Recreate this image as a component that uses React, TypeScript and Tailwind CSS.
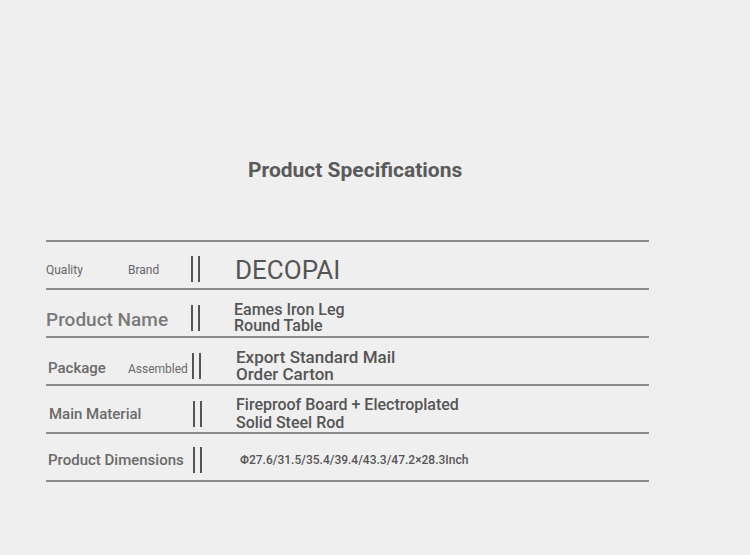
import React from "react";

type Row = {
  label: React.ReactNode;
  value: React.ReactNode;
  pad: string;
  barsX: string;
  valueX: string;
};

const Bars = () => (
  <div className="flex h-[26px] gap-[5px] shrink-0">
    <span className="w-[2px] bg-[#555]" />
    <span className="w-[2px] bg-[#555]" />
  </div>
);

const rows: Row[] = [
  {
    label: (
      <div className="flex items-baseline pt-[10px]">
        <span className="w-[82px] text-[12px] text-[#666]">Quality</span>
        <span className="text-[12px] text-[#666]">Brand</span>
      </div>
    ),
    pad: "pt-[8px]",
    barsX: "w-[145px]",
    valueX: "w-[35px]",
    value: <span className="text-[26px] text-[#555] leading-none pt-[2px]">DECOPAI</span>,
  },
  {
    label: (
      <span className="pt-[15px] text-[19px] font-medium text-[#7a7a7a]">Product Name</span>
    ),
    pad: "pt-[10px]",
    barsX: "w-[145px]",
    valueX: "w-[34px]",
    value: (
      <div className="text-[16px] leading-[16px] text-[#555] font-medium">
        <div>Eames Iron Leg</div>
        <div>Round Table</div>
      </div>
    ),
  },
  {
    label: (
      <div className="flex items-baseline pl-[2px] pt-[14px]">
        <span className="w-[80px] text-[15px] font-medium text-[#6a6a6a]">Package</span>
        <span className="text-[12px] text-[#6a6a6a]">Assembled</span>
      </div>
    ),
    pad: "pt-[10px]",
    barsX: "w-[146px]",
    valueX: "w-[35px]",
    value: (
      <div className="text-[17px] leading-[17px] text-[#555] font-medium">
        <div>Export Standard Mail</div>
        <div>Order Carton</div>
      </div>
    ),
  },
  {
    label: (
      <span className="pl-[3px] pt-[11px] text-[15px] font-medium text-[#6a6a6a]">
        Main Material
      </span>
    ),
    pad: "pt-[10px]",
    barsX: "w-[147px]",
    valueX: "w-[34px]",
    value: (
      <div className="text-[16px] leading-[18px] text-[#555] font-medium">
        <div>Fireproof Board + Electroplated</div>
        <div>Solid Steel Rod</div>
      </div>
    ),
  },
  {
    label: (
      <span className="pl-[2px] pt-[6px] text-[15px] font-medium text-[#6a6a6a]">
        Product Dimensions
      </span>
    ),
    pad: "pt-[6px]",
    barsX: "w-[147px]",
    valueX: "w-[38px]",
    value: (
      <span className="text-[12px] font-medium text-[#555]">
        Φ27.6/31.5/35.4/39.4/43.3/47.2×28.3Inch
      </span>
    ),
  },
];

export default function App() {
  return (
    <div
      className="w-[750px] h-[555px] bg-[#efefef] overflow-hidden"
      style={{ fontFamily: "Roboto, 'Liberation Sans', sans-serif" }}
    >
      <div className="pt-[157px] pl-[248px]">
        <h1 className="text-[21px] leading-[26px] font-bold text-[#5a5a5a]">
          Product Specifications
        </h1>
      </div>

      <div className="ml-[46px] mt-[57px] w-[603px] border-t-2 border-[#8a8a8a]">
        {rows.map((r, i) => (
          <div
            key={i}
            className={`relative h-[48px] border-b-2 border-[#8a8a8a] flex items-center ${r.pad}`}
          >
            <div className="absolute left-0 top-0 bottom-0 flex items-center">
              {r.label}
            </div>
            <div className={`shrink-0 ${r.barsX}`} />
            <Bars />
            <div className={`shrink-0 ${r.valueX}`} />
            {r.value}
          </div>
        ))}
      </div>
    </div>
  );
}
